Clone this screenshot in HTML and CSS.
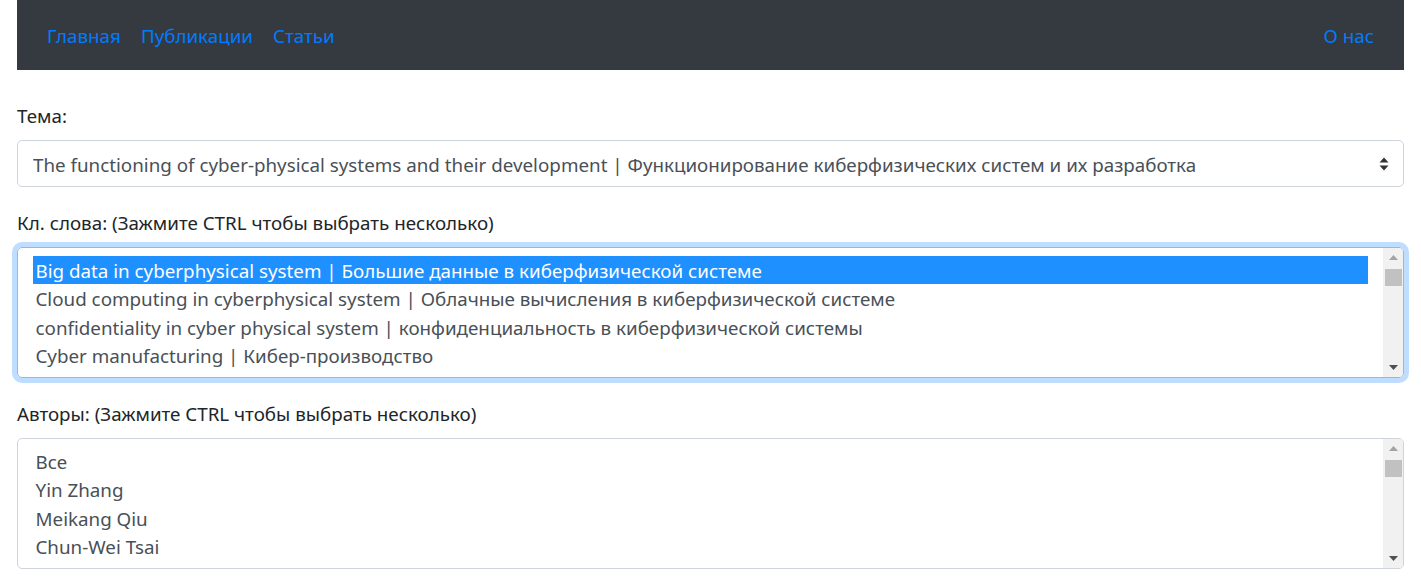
FILE: index.html
```html
<!DOCTYPE html>
<html lang="ru">
<head>
<meta charset="utf-8">
<title>Поиск</title>
<link rel="stylesheet" href="styles.css">
</head>
<body>
<div class="page">
  <nav class="navbar">
    <div class="nav-left">
      <a class="nav-link" href="#">Главная</a>
      <a class="nav-link" href="#">Публикации</a>
      <a class="nav-link" href="#">Статьи</a>
    </div>
    <div class="nav-right">
      <a class="nav-link" href="#">О нас</a>
    </div>
  </nav>

  <form class="form">
    <div class="form-group">
      <label class="label">Тема:</label>
      <div class="select">
        <span class="select-text">The functioning of cyber-physical systems and their development | Функционирование киберфизических систем и их разработка</span>
        <svg class="select-arrows" width="10" height="14" viewBox="0 0 10 14"><path d="M5 0.5 L9.5 5.5 H0.5 Z" fill="#333"/><path d="M5 13.5 L9.5 8.5 H0.5 Z" fill="#333"/></svg>
      </div>
    </div>

    <div class="form-group">
      <label class="label">Кл. слова: (Зажмите CTRL чтобы выбрать несколько)</label>
      <div class="listbox focused">
        <div class="options">
          <div class="option selected">Big data in cyberphysical system | Большие данные в киберфизической системе</div>
          <div class="option">Cloud computing in cyberphysical system | Облачные вычисления в киберфизической системе</div>
          <div class="option">confidentiality in cyber physical system | конфиденциальность в киберфизической системы</div>
          <div class="option">Cyber manufacturing | Кибер-производство</div>
          <div class="option">Cyberphysical systems modelling | Моделирование киберфизических систем</div>
        </div>
        <div class="scrollbar">
          <div class="sb-btn"><svg width="9" height="5" viewBox="0 0 9 5"><path d="M4.5 0 L9 5 H0 Z" fill="#a3a3a3"/></svg></div>
          <div class="sb-track"><div class="sb-thumb"></div></div>
          <div class="sb-btn"><svg width="9" height="5" viewBox="0 0 9 5"><path d="M4.5 5 L9 0 H0 Z" fill="#505050"/></svg></div>
        </div>
      </div>
    </div>

    <div class="form-group">
      <label class="label">Авторы: (Зажмите CTRL чтобы выбрать несколько)</label>
      <div class="listbox">
        <div class="options">
          <div class="option">Все</div>
          <div class="option">Yin Zhang</div>
          <div class="option">Meikang Qiu</div>
          <div class="option">Chun-Wei Tsai</div>
        </div>
        <div class="scrollbar">
          <div class="sb-btn"><svg width="9" height="5" viewBox="0 0 9 5"><path d="M4.5 0 L9 5 H0 Z" fill="#a3a3a3"/></svg></div>
          <div class="sb-track"><div class="sb-thumb"></div></div>
          <div class="sb-btn"><svg width="9" height="5" viewBox="0 0 9 5"><path d="M4.5 5 L9 0 H0 Z" fill="#505050"/></svg></div>
        </div>
      </div>
    </div>
  </form>
</div>
</body>
</html>
```

FILE: styles.css
```css
* { box-sizing: border-box; }

html, body {
  margin: 0;
  padding: 0;
  background: #fff;
}

body {
  font-family: "Noto Sans", "Open Sans", sans-serif;
  font-size: 18.8px;
  line-height: 30px;
  color: #212529;
}

.page {
  padding: 0 17px;
}

.navbar {
  height: 70px;
  background: #343a40;
  display: flex;
  align-items: center;
  justify-content: space-between;
  padding: 2px 20px 0 20px;
}

.nav-left, .nav-right {
  display: flex;
}

.nav-link {
  color: #007bff;
  text-decoration: none;
  padding: 0 10px;
  line-height: 30px;
}

.form {
  padding-top: 30px;
}

.form-group {
  margin-bottom: 20px;
}

.label {
  display: block;
  margin-bottom: 10px;
  line-height: 30px;
  padding-top: 1px;
  height: 30px;
}

.select {
  height: 47px;
  border: 1px solid #ced4da;
  border-radius: 5px;
  display: flex;
  align-items: center;
  justify-content: space-between;
  padding: 2px 14px 0 15px;
  color: #495057;
}

.select-text {
  white-space: nowrap;
  overflow: hidden;
}

.select-arrows {
  flex: none;
  margin-top: -2px;
}

.listbox {
  height: 131px;
  border: 1px solid #ced4da;
  border-radius: 5px;
  display: flex;
  color: #495057;
  overflow: hidden;
}

.listbox.focused {
  border-color: #80bdff;
  box-shadow: 0 0 0 5px rgba(0, 123, 255, 0.25);
}

.options {
  flex: 1;
  padding: 7.5px 15px 0 15px;
  overflow: hidden;
}

.option {
  height: 28.5px;
  line-height: 30px;
  padding: 0 2.5px;
  white-space: nowrap;
}

.option.selected {
  background: #1e90ff;
  color: #fff;
}

.scrollbar {
  flex: none;
  width: 20px;
  background: #f1f1f1;
  display: flex;
  flex-direction: column;
}

.sb-btn {
  height: 19px;
  display: flex;
  align-items: center;
  justify-content: center;
}

.sb-track {
  flex: 1;
  padding: 2px 1px 0 2px;
}

.sb-thumb {
  height: 17px;
  background: #c1c1c1;
}
```
